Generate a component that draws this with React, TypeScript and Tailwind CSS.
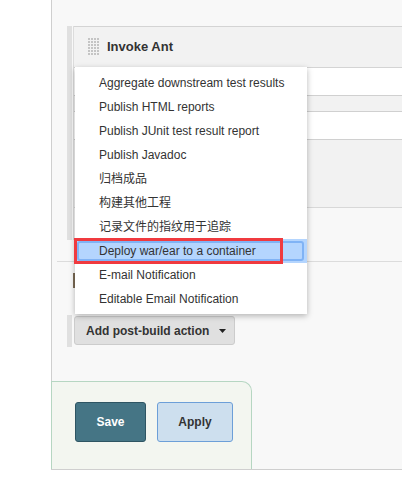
import React from "react";

const items = [
  "Aggregate downstream test results",
  "Publish HTML reports",
  "Publish JUnit test result report",
  "Publish Javadoc",
  "归档成品",
  "构建其他工程",
  "记录文件的指纹用于追踪",
  "Deploy war/ear to a container",
  "E-mail Notification",
  "Editable Email Notification",
];

function Grip() {
  const dots = [];
  for (let r = 0; r < 6; r++) {
    for (let c = 0; c < 4; c++) {
      dots.push(<rect key={`${r}-${c}`} x={c * 3} y={r * 3} width={2} height={2} fill="#c4c4c4" />);
    }
  }
  return (
    <svg width="12" height="18" viewBox="0 0 12 18" className="block">
      {dots}
    </svg>
  );
}

export default function App() {
  return (
    <div
      className="relative w-[402px] h-[480px] bg-white overflow-hidden flex"
      style={{ fontFamily: '"Liberation Sans", Arial, "Noto Sans CJK SC", sans-serif' }}
    >
      <div className="w-[51px] shrink-0" />
      <div className="flex flex-col w-[351px] h-[470px] border-l border-b border-[#cfcfcf] bg-[#f8f8f8]">
        <div className="h-[26px] shrink-0" />
        {/* build step */}
        <div className="flex pl-[15px] h-[214px] shrink-0">
          <div className="w-[5px] bg-[#e0e0e0]" />
          <div className="w-px" />
          <div className="flex-1 flex flex-col border-l border-[#dcdcdc]">
            <div className="h-[42px] shrink-0 bg-[#f2f2f2] border-t border-b border-[#d4d4d4] flex items-center pl-[14px] gap-[7px]">
              <Grip />
              <span className="text-[13px] font-bold text-[#333]">Invoke Ant</span>
            </div>
            <div className="h-[140px] shrink-0 bg-[#f2f2f2] border-b border-[#d8d8d8] flex flex-col">
              <div className="h-[28px] bg-white border-b border-[#d0d0d0]" />
              <div className="h-[15px]" />
              <div className="h-[29px] bg-white border-t border-b border-[#d0d0d0]" />
            </div>
            <div className="flex-1 bg-[#f8f8f8]" />
          </div>
        </div>
        <div className="h-[21px] shrink-0" />
        <div className="ml-[5px] h-px bg-[#dcdcdc] shrink-0" />
        <div className="h-[53px] shrink-0 pl-[21px] pt-[11px]">
          <div className="w-[2px] h-[15px] bg-[#7a6a55]" />
        </div>
        {/* add post-build action */}
        <div className="flex pl-[15px] h-[32px] shrink-0">
          <div className="w-[5px] bg-[#e0e0e0]" />
          <div className="ml-[2px] mt-px w-[161px] h-[29px] bg-[#e0e0e0] border border-[#cccccc] rounded-[3px] flex items-center pl-[11px]">
            <span className="text-[12px] font-bold text-[#333]">Add post-build action</span>
            <svg width="7" height="4" viewBox="0 0 7 4" className="ml-[10px]">
              <path d="M0 0 L7 0 L3.5 4 Z" fill="#222" />
            </svg>
          </div>
        </div>
        <div className="flex-1" />
        {/* bottom bar */}
        <div className="-ml-px w-[201px] h-[88px] shrink-0 bg-[#f3f6f0] border-t border-r border-l border-[#b6d6c2] rounded-tr-[10px] flex gap-[11px] pl-[23px] pt-[20px]">
          <button className="w-[71px] h-[40px] bg-[#457585] border border-[#2e5563] rounded-[3px] text-white text-[12px] font-bold">
            Save
          </button>
          <button className="w-[76px] h-[40px] bg-[#cddfee] border border-[#6c9fd8] rounded-[3px] text-[#333] text-[12px] font-bold">
            Apply
          </button>
        </div>
      </div>

      {/* dropdown menu */}
      <div className="absolute left-[75px] top-[67px] w-[232px] h-[247px] bg-white shadow-[0_2px_6px_rgba(0,0,0,0.28)] py-[4px]">
        {items.map((t, i) => (
          <div
            key={t}
            className={
              i === 7
                ? "relative h-[24px] flex items-center pl-[24px] text-[12px] text-[#333] bg-[#b4d5fe]"
                : "h-[24px] flex items-center pl-[24px] text-[12px] text-[#333]"
            }
          >
            {i === 7 && (
              <div className="absolute left-[2px] right-[3px] top-[2px] bottom-[2px] border-2 border-[#80b3f5] rounded-[3px]" />
            )}
            <span className="relative">{t}</span>
          </div>
        ))}
      </div>

      {/* red annotation */}
      <div className="absolute left-[74px] top-[238px] w-[209px] h-[26px] border-[3px] border-[#f03a3f]" />
    </div>
  );
}
